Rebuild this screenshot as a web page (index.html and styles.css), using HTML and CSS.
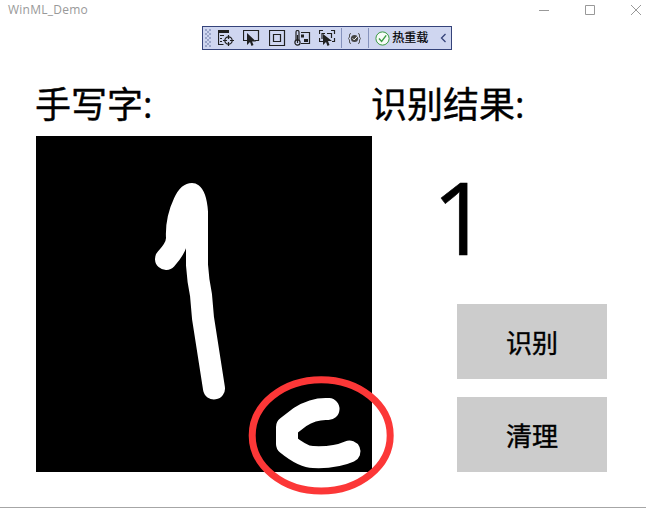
FILE: index.html
```html
<!DOCTYPE html>
<html lang="zh-CN">
<head>
<meta charset="utf-8">
<title>WinML_Demo</title>
<link rel="stylesheet" href="styles.css">
</head>
<body>
<div class="window">
  <header class="titlebar">
    <span class="title">WinML_Demo</span>
    <div class="controls">
      <svg width="12" height="12" viewBox="0 0 12 12"><path d="M1 6.5h10"/></svg>
      <svg width="12" height="12" viewBox="0 0 12 12"><path d="M1.5 1.5h9v9h-9z"/></svg>
      <svg width="12" height="12" viewBox="0 0 12 12"><path d="M1 1l10 10M11 1L1 11"/></svg>
    </div>
  </header>

  <div class="debugbar">
    <span class="grip"></span>
    <div class="tools">
      <svg width="17" height="17" viewBox="0 0 17 17"><path class="solid" d="M0 0h11v3H0z"/><path d="M.5 1v13.500h5M2 5.500h4M2 8.500h2M2 11.500h2"/><circle cx="10.500" cy="10.500" r="3.700"/><path d="M10.500 5v4M10.500 12v4M5 10.500h4M12 10.500h4"/></svg>
      <svg width="17" height="17" viewBox="0 0 17 17"><path d="M4 10.500H.5v-10h15v10H12"/><path class="solid" d="M4 3v12l3-3 1.500 4 2-1L9 11.500h4z"/></svg>
      <svg width="17" height="17" viewBox="0 0 17 17"><path d="M.5.5h15v15H.5zM4.500 4.500h7v7h-7z"/></svg>
      <svg width="17" height="17" viewBox="0 0 17 17"><path d="M2 10V2q0-1.500 1.500-1.500T5 2v8M7 2.500h8.500v11H7"/><circle cx="3.500" cy="12.500" r="2.600"/><path d="M3.500 5v8"/><path class="solid" d="M7 4.500h3v3H7zM10 9h4v3h-4z"/></svg>
      <svg width="17" height="17" viewBox="0 0 17 17"><path d="M.5 4V.5H4M12 .5h3.500V4M15.500 8v3.500H13M4 11.500H.5V8M3 9V3.500h3M8 3.500h4.500V8"/><path class="solid" d="M4 4v11l3-3 1.500 4 2-1L9 11h4z"/></svg>
    </div>
    <span class="rule"></span>
    <svg class="binding" width="15" height="13" viewBox="0 0 15 13"><path d="M4 1.500Q2.500 1.500 2.500 3v2L1.500 6.500l1 1.500v2q0 1.500 1.500 1.500M11 1.500Q12.500 1.500 12.500 3v2l1 1.500-1 1.500v2q0 1.500-1.500 1.500"/><circle class="solid" cx="7.500" cy="6.500" r="3.600"/><path class="tick" d="M5.700 6.400l1.500 1.500 3.300-3.600"/></svg>
    <span class="rule"></span>
    <svg class="check" width="15" height="15" viewBox="0 0 15 15"><circle cx="7.500" cy="7.500" r="6.600"/><path d="M4 7.500l2.600 3 4.600-6.200"/></svg>
    <span class="reload">热重载</span>
    <svg class="chevron" width="7" height="10" viewBox="0 0 7 10"><path d="M5.500 1L1.500 5l4 4"/></svg>
  </div>

  <main class="content">
    <section class="draw">
      <h1>手写字:</h1>
      <svg class="pad" width="336" height="336" viewBox="36 136 336 336">
        <path class="pen" d="M166 259Q177 247 177 238Q176 220 184 203Q188 194 192 194Q196 197 197 212V265Q198 281 201 295L203 318L214 388.500"/>
        <path class="pen" d="M328.500 409Q314 408 300 417L287 427V444Q303 457 313 457Q335 458 349.500 451.500"/>
        <ellipse class="marker" cx="321.200" cy="435.400" rx="69" ry="55.600"/>
      </svg>
    </section>
    <section class="result">
      <h1>识别结果:</h1>
      <output class="digit">1</output>
      <button>识别</button>
      <button>清理</button>
    </section>
  </main>
</div>
</body>
</html>
```

FILE: styles.css
```css
* { box-sizing: border-box; }

body {
  margin: 0;
  background: #fff;
  color: #000;
  font-family: "Open Sans", "Noto Sans CJK SC", sans-serif;
}

.window {
  position: relative;
  display: flex;
  flex-direction: column;
  width: 646px;
  height: 508px;
  border-bottom: 1px solid #a6a6a6;
  overflow: hidden;
}

svg { display: block; flex: none; }

.titlebar {
  display: flex;
  justify-content: space-between;
  height: 20px;
  padding: 0 4px 0 8px;
}

.title {
  font-size: 12px;
  line-height: 20px;
  letter-spacing: .25px;
  color: #999;
}

.controls { display: flex; gap: 34px; padding-top: 4px; }
.controls svg { fill: none; stroke: #999; stroke-width: 1; }

.debugbar {
  position: absolute;
  left: 202px;
  top: 26px;
  display: flex;
  align-items: center;
  width: 250px;
  height: 24px;
  padding-left: 2px;
  border: 1px solid #35437a;
  background: #cfd6f0;
}

.debugbar svg { fill: none; stroke: #202020; stroke-width: 1.2; }
.debugbar .solid { fill: #202020; stroke: none; }

.grip {
  width: 6px;
  height: 18px;
  background:
    radial-gradient(circle at 1px 1px, #9aa5c8 .8px, transparent 1px) 0 0 / 4px 4px,
    radial-gradient(circle at 3px 3px, #9aa5c8 .8px, transparent 1px) 0 0 / 4px 4px;
}

.tools { display: flex; gap: 8.3px; margin-left: 7px; }
.rule { width: 1px; height: 20px; margin-left: 5px; background: #8592bc; }
.debugbar .binding { margin: 0 1px 0 5px; stroke: #555; stroke-width: 1; }
.debugbar .binding .solid { fill: #444; }
.debugbar .tick { stroke: #fff; }
.debugbar .check { margin-left: 6px; stroke: #3a9b42; stroke-width: 1.4; }
.check circle { fill: #f7fbf7; stroke-width: 1; }
.reload {
  margin-left: 2px;
  font-size: 12px;
  line-height: 20px;
  white-space: nowrap;
  -webkit-text-stroke: .2px #000;
}
.debugbar .chevron { margin-left: 12px; stroke: #35437a; stroke-width: 1.3; }

.content { display: flex; padding: 60px 0 0 36px; }
.draw { width: 336px; }

h1 {
  height: 56px;
  margin: 0 0 0 -1px;
  font-size: 36px;
  font-weight: 400;
  line-height: 49px;
  -webkit-text-stroke: .4px #000;
}

.pad { background: #000; overflow: visible; }
.pen {
  fill: none;
  stroke: #fff;
  stroke-width: 22;
  stroke-linecap: round;
  stroke-linejoin: round;
}
.marker { fill: none; stroke: #fc3737; stroke-width: 7; }

.result { display: flex; flex-direction: column; width: 235px; }

.digit {
  height: 168px;
  padding-left: 60px;
  font-size: 100px;
  line-height: 160px;
  -webkit-text-stroke: .5px #000;
}

button {
  align-self: flex-end;
  width: 150px;
  height: 75px;
  margin: 0 0 18px;
  padding: 0;
  border: 0;
  background: #ccc;
  color: #000;
  font: 26px "Open Sans", "Noto Sans CJK SC", sans-serif;
  -webkit-text-stroke: .4px #000;
}
```
